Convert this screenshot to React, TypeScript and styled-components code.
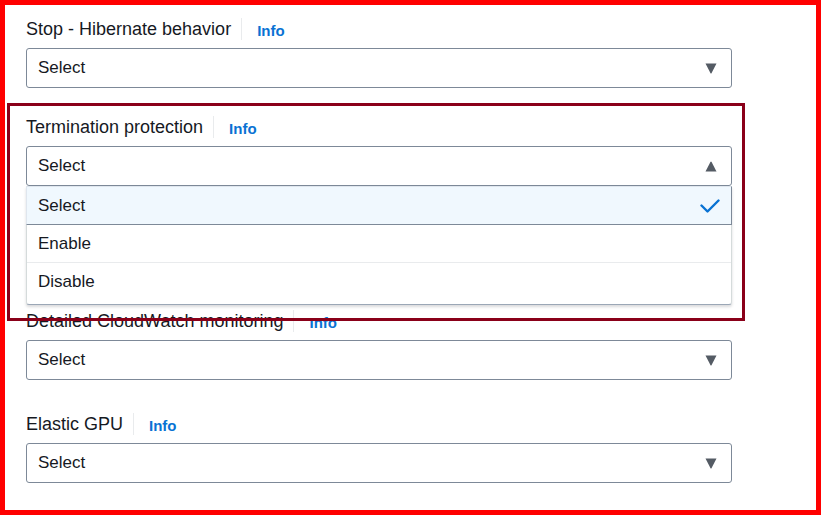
import React from "react";
import styled, { createGlobalStyle } from "styled-components";

const GlobalStyle = createGlobalStyle`
  html, body {
    margin: 0;
    padding: 0;
    background: #ffffff;
  }
  body {
    font-family: "Liberation Sans", Arial, sans-serif;
    color: #16191f;
  }
`;

const Frame = styled.div`
  width: 821px;
  height: 515px;
  box-sizing: border-box;
  border: 5px solid #ff0000;
  background: #ffffff;
  padding: 12px 0 0 21px;
  overflow: hidden;
`;

const Form = styled.div`
  display: flex;
  flex-direction: column;
  width: 706px;
`;

const Field = styled.div<{ $gap: number }>`
  position: relative;
  margin-top: ${(p) => p.$gap}px;
`;

const LabelRow = styled.div`
  display: flex;
  align-items: center;
  height: 24px;
  margin-bottom: 7px;
`;

const Label = styled.span`
  font-size: 18px;
  color: #16191f;
  white-space: nowrap;
`;

const Divider = styled.span`
  width: 1px;
  height: 22px;
  background: #e9ebed;
  margin: 0 15px 0 10px;
`;

const InfoLink = styled.span`
  font-size: 15px;
  font-weight: 700;
  color: #0972d3;
  margin-top: 2px;
`;

const Trigger = styled.div`
  position: relative;
  display: flex;
  align-items: center;
  justify-content: space-between;
  height: 40px;
  box-sizing: border-box;
  border: 1px solid #7d8998;
  border-radius: 3px;
  padding: 0 14px 0 11px;
  background: #ffffff;
  font-size: 17px;
  color: #16191f;
`;

const Caret = styled.svg`
  width: 12px;
  height: 11px;
  display: block;
`;

const Dropdown = styled.div`
  position: absolute;
  left: -1px;
  right: -1px;
  top: calc(100% + 1px);
  z-index: 1;
  background: #ffffff;
  border: 1px solid #d5dbdb;
  border-top: none;
  border-bottom: 1px solid #9ba7b6;
  border-radius: 0 0 3px 3px;
  box-shadow: 0 2px 3px rgba(0, 7, 22, 0.15);
  padding-bottom: 3px;
`;

const Option = styled.div<{ $active?: boolean }>`
  display: flex;
  align-items: center;
  justify-content: space-between;
  box-sizing: border-box;
  height: ${(p) => (p.$active ? 39 : 38)}px;
  margin: ${(p) => (p.$active ? "0 -1px" : "0")};
  padding: 0 11px;
  font-size: 17px;
  color: #16191f;
  background: ${(p) => (p.$active ? "#f0f8fe" : "#ffffff")};
  border: ${(p) => (p.$active ? "1px solid #dfe6ee" : "none")};
  border-bottom: 1px solid ${(p) => (p.$active ? "#7d8998" : "#e9ebed")};
  border-right: ${(p) => (p.$active ? "1px solid #7d8998" : "none")};

  &:last-child {
    border-bottom: none;
  }
`;

const Highlight = styled.div`
  position: absolute;
  left: -19px;
  top: -12px;
  width: 738px;
  height: 218px;
  box-sizing: border-box;
  border: 3px solid #8a0019;
  z-index: 2;
  pointer-events: none;
`;

const CaretDown = () => (
  <Caret viewBox="0 0 12 11">
    <path d="M0.5 0.5 H11.5 L6.6 10 Q6 11 5.4 10 Z" fill="#545b64" />
  </Caret>
);

const CaretUp = () => (
  <Caret viewBox="0 0 12 11">
    <path d="M0.5 10.5 H11.5 L6.6 1 Q6 0 5.4 1 Z" fill="#545b64" />
  </Caret>
);

const Check = () => (
  <svg width="20" height="14" viewBox="0 0 20 14">
    <path
      d="M1.5 6.5 L7.5 12.5 L18.5 1.5"
      fill="none"
      stroke="#0972d3"
      strokeWidth="2.4"
      strokeLinecap="round"
      strokeLinejoin="round"
    />
  </svg>
);

const FieldLabel = ({ text }: { text: string }) => (
  <LabelRow>
    <Label>{text}</Label>
    <Divider />
    <InfoLink>Info</InfoLink>
  </LabelRow>
);

const options = ["Select", "Enable", "Disable"];

export default function App(): JSX.Element {
  return (
    <>
      <GlobalStyle />
      <Frame>
        <Form>
          <Field $gap={0}>
            <FieldLabel text="Stop - Hibernate behavior" />
            <Trigger>
              Select
              <CaretDown />
            </Trigger>
          </Field>

          <Field $gap={27}>
            <Highlight />
            <FieldLabel text="Termination protection" />
            <Trigger>
              Select
              <CaretUp />
              <Dropdown>
                {options.map((o, i) => (
                  <Option key={o} $active={i === 0}>
                    {o}
                    {i === 0 && <Check />}
                  </Option>
                ))}
              </Dropdown>
            </Trigger>
          </Field>

          <Field $gap={123}>
            <FieldLabel text="Detailed CloudWatch monitoring" />
            <Trigger>
              Select
              <CaretDown />
            </Trigger>
          </Field>

          <Field $gap={32}>
            <FieldLabel text="Elastic GPU" />
            <Trigger>
              Select
              <CaretDown />
            </Trigger>
          </Field>
        </Form>
      </Frame>
    </>
  );
}
